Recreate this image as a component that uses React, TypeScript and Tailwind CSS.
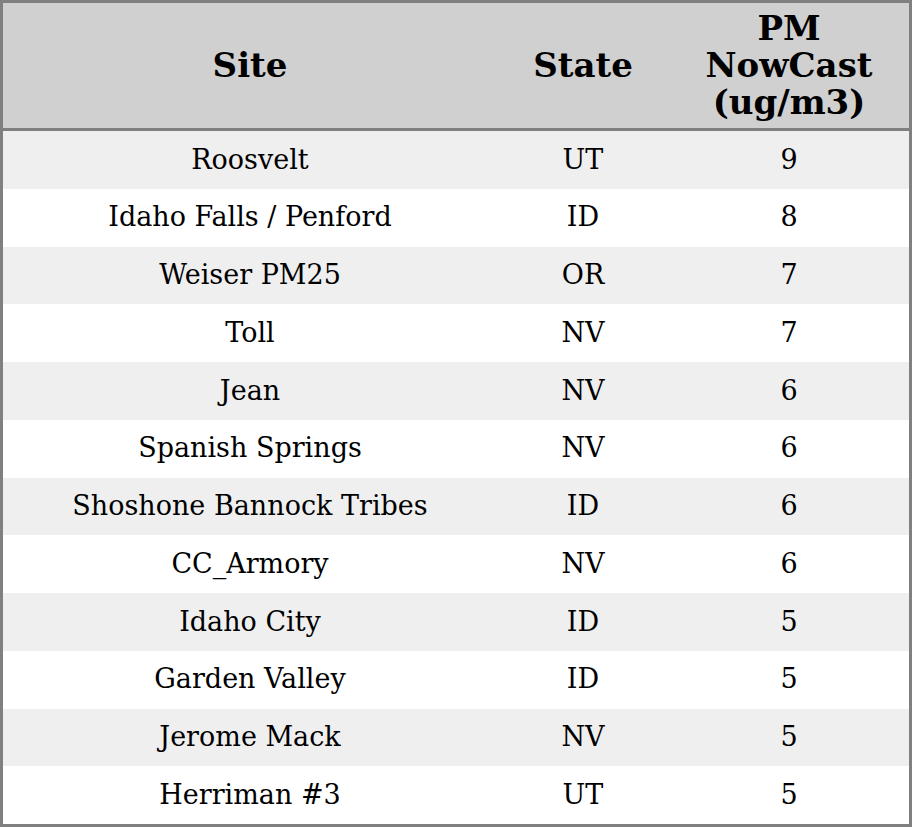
import React from "react"

const rows: [string, string, number][] = [
    ["Roosvelt", "UT", 9],
    ["Idaho Falls / Penford", "ID", 8],
    ["Weiser PM25", "OR", 7],
    ["Toll", "NV", 7],
    ["Jean", "NV", 6],
    ["Spanish Springs", "NV", 6],
    ["Shoshone Bannock Tribes", "ID", 6],
    ["CC_Armory", "NV", 6],
    ["Idaho City", "ID", 5],
    ["Garden Valley", "ID", 5],
    ["Jerome Mack", "NV", 5],
    ["Herriman #3", "UT", 5],
]

export default function App() {
    return (
        <div
            className="w-[912px] h-[827px] border-[3px] border-[#808080] bg-white text-black flex flex-col"
            style={{ fontFamily: '"DejaVu Serif", serif' }}
        >
            <div className="h-[128px] shrink-0 grid grid-cols-[494px_172px_1fr] items-center bg-[#d0d0d0] border-b-[3px] border-[#808080] text-[34px] font-bold leading-[37px] text-center">
                <div>Site</div>
                <div>State</div>
                <div>
                    PM
                    <br />
                    NowCast
                    <br />
                    (ug/m3)
                </div>
            </div>
            <div className="flex-1 flex flex-col">
                {rows.map(([site, state, val], i) => (
                    <div
                        key={site}
                        className={
                            "flex-1 grid grid-cols-[494px_172px_1fr] items-center text-center text-[27px] " +
                            (i % 2 === 0 ? "bg-[#efefef]" : "bg-white")
                        }
                    >
                        <div>{site}</div>
                        <div>{state}</div>
                        <div>{val}</div>
                    </div>
                ))}
            </div>
        </div>
    )
}
